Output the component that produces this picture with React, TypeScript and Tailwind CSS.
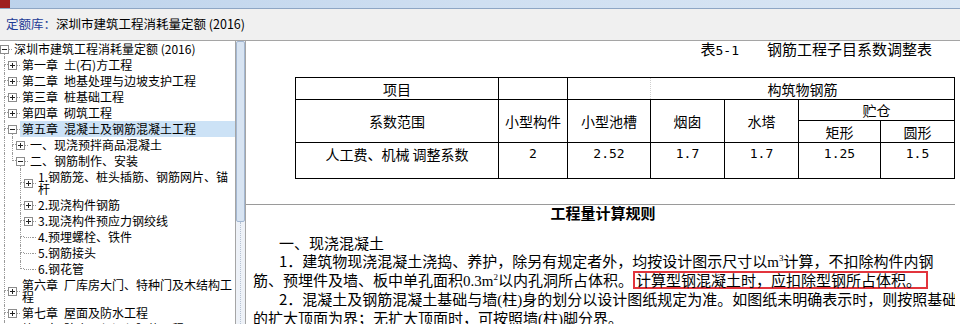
type Node = {
  lv: number;
  g: string;
  box?: 'plus' | 'minus';
  below?: boolean;
  sel?: boolean;
  a: string;
  b?: string;
};

const rows: Node[] = [
  { lv: 0, g: '', box: 'minus', below: true, a: '深圳市建筑工程消耗量定额 (2016)' },
  { lv: 1, g: 'T', box: 'plus', a: '第一章', b: '土(石)方工程' },
  { lv: 1, g: 'T', box: 'plus', a: '第二章', b: '地基处理与边坡支护工程' },
  { lv: 1, g: 'T', box: 'plus', a: '第三章', b: '桩基础工程' },
  { lv: 1, g: 'T', box: 'plus', a: '第四章', b: '砌筑工程' },
  { lv: 1, g: 'T', box: 'minus', below: true, sel: true, a: '第五章', b: '混凝土及钢筋混凝土工程' },
  { lv: 2, g: '|T', box: 'plus', a: '一、现浇预拌商品混凝土' },
  { lv: 2, g: '|L', box: 'minus', below: true, a: '二、钢筋制作、安装' },
  { lv: 3, g: '| T', box: 'plus', a: '1.钢筋笼、桩头插筋、钢筋网片、锚杆' },
  { lv: 3, g: '| T', box: 'plus', a: '2.现浇构件钢筋' },
  { lv: 3, g: '| T', box: 'plus', a: '3.现浇构件预应力钢绞线' },
  { lv: 3, g: '| T', a: '4.预埋螺栓、铁件' },
  { lv: 3, g: '| T', a: '5.钢筋接头' },
  { lv: 3, g: '| L', a: '6.钢花管' },
  { lv: 1, g: 'T', box: 'plus', a: '第六章', b: '厂库房大门、特种门及木结构工程' },
  { lv: 1, g: 'T', box: 'plus', a: '第七章', b: '屋面及防水工程' },
  { lv: 1, g: 'T', box: 'plus', a: '第八章', b: '防腐、保温与隔热工程' },
];

function Guide({ k }: { k: string }) {
  const vTop = k !== ' ';
  const horiz = k === 'T' || k === 'L';
  const vBottom = k === '|' || k === 'T';
  return (
    <div className="w-[8px] shrink-0 flex flex-col">
      <div className="flex-1 flex">
        <div className="w-[4px] shrink-0" />
        <div
          className={`flex-1 border-dotted border-[#9a9a9a] ${vTop ? 'border-l' : ''} ${horiz ? 'border-b' : ''}`}
        />
      </div>
      <div className="flex-1 flex">
        <div className="w-[4px] shrink-0" />
        <div className={`flex-1 border-dotted border-[#9a9a9a] ${vBottom ? 'border-l' : ''}`} />
      </div>
    </div>
  );
}

function ToggleBox({ kind }: { kind: 'plus' | 'minus' }) {
  return (
    <svg width="9" height="9" viewBox="0 0 9 9" className="block shrink-0">
      <rect x="0.5" y="0.5" width="8" height="8" fill="#fff" stroke="#8c8c8c" />
      <path d="M2 4.5h5" stroke="#222" />
      {kind === 'plus' && <path d="M4.5 2v5" stroke="#222" />}
    </svg>
  );
}

function TreeRow({ n }: { n: Node }) {
  return (
    <div className="flex items-stretch">
      {n.g.split('').map((k, i) => (
        <Guide key={i} k={k} />
      ))}
      {n.box ? (
        <div className="w-[9px] shrink-0 flex flex-col">
          <div className="flex-1" />
          <ToggleBox kind={n.box} />
          <div className="flex-1 flex">
            <div className="w-[4px] shrink-0" />
            <div className={`flex-1 border-dotted border-[#9a9a9a] ${n.below ? 'border-l' : ''}`} />
          </div>
        </div>
      ) : (
        <div className="w-[9px] shrink-0 flex flex-col">
          <div className="flex-1 border-b border-dotted border-[#9a9a9a]" />
          <div className="flex-1" />
        </div>
      )}
      <div className="w-[3px] shrink-0 flex flex-col">
        <div className="flex-1 border-b border-dotted border-[#9a9a9a]" />
        <div className="flex-1" />
      </div>
      <div
        className={`flex-1 min-w-0 py-[2px] pl-[2px] text-[12px] leading-[12px] text-black ${n.sel ? 'bg-[#cce2f6]' : ''}`}
      >
        {n.a}
        {n.b && (
          <>
            <span className="inline-block w-[6px]" />
            {n.b}
          </>
        )}
      </div>
    </div>
  );
}

const cell = 'border border-black p-0 text-center align-middle';
const num = "border border-black p-0 text-center align-top pt-[3px] font-['DejaVu_Sans_Mono',monospace] text-[13px]";
const serif = "font-['Liberation_Serif',serif]";

export default function App() {
  return (
    <div className="w-[960px] h-[324px] overflow-hidden bg-[#f0f0f0] flex flex-col font-['Noto_Sans_CJK_SC',sans-serif] text-black">
      {/* window title strip */}
      <div className="h-[9px] shrink-0 flex border-b border-[#8ea6c4] bg-linear-to-r from-[#bcd2eb] via-[#cfdff1] to-[#d9e6f4]">
        <div className="w-[10px] bg-[#9e1f1f]" />
      </div>

      {/* quota library label */}
      <div className="h-[31px] shrink-0 flex items-center pl-[6px] pb-[2px] text-[12.5px] leading-[14px]">
        <span className="text-[#1e3c96]">定额库：</span>
        <span>深圳市建筑工程消耗量定额 (2016)</span>
      </div>

      <div className="flex-1 min-h-0 flex">
        {/* tree */}
        <div className="w-[236px] shrink-0 bg-white border-t border-r border-[#a5a5a5] overflow-hidden">
          {rows.map((n, i) => (
            <TreeRow key={i} n={n} />
          ))}
        </div>

        {/* scrollbar */}
        <div className="w-[9px] shrink-0 flex flex-col border-t border-[#a5a5a5] bg-[#eef2f8]">
          <div className="h-[181px] shrink-0 bg-[#d8e4f2] border border-[#a3b7d1] rounded-[2px]" />
          <div className="flex-1 flex">
            <div className="w-[4px] shrink-0" />
            <div className="flex-1 border-l border-dotted border-[#b5c2d3]" />
          </div>
        </div>

        {/* document */}
        <div className="flex-1 min-w-0 flex flex-col bg-white border-t border-l border-[#a5a5a5]">
          <div className="h-[163px] shrink-0">
            <div className="flex justify-end pr-[28px] text-[15px] leading-[15px]">
              <span>
                表<span className="font-['DejaVu_Sans_Mono',monospace] text-[13px]">5-1</span>
              </span>
              <span className="ml-[28px]">钢筋工程子目系数调整表</span>
            </div>

            <table className="ml-[49px] mt-[19px] w-[659px] table-fixed border-collapse text-[14px] leading-[16px]">
              <colgroup>
                <col className="w-[203px]" />
                <col className="w-[69px]" />
                <col className="w-[83px]" />
                <col className="w-[74px]" />
                <col className="w-[74px]" />
                <col className="w-[82px]" />
                <col className="w-[74px]" />
              </colgroup>
              <tbody>
                <tr className="h-[22px]">
                  <td className={cell}>项目</td>
                  <td className={cell}></td>
                  <td className={`${cell} [border-right-style:dotted] border-r-[#cfcfcf]`}></td>
                  <td colSpan={4} className={`${cell} [border-left-style:dotted] border-l-[#cfcfcf]`}>
                    构筑物钢筋
                  </td>
                </tr>
                <tr className="h-[21px]">
                  <td rowSpan={2} className={cell}>系数范围</td>
                  <td rowSpan={2} className={cell}>小型构件</td>
                  <td rowSpan={2} className={cell}>小型池槽</td>
                  <td rowSpan={2} className={cell}>烟囱</td>
                  <td rowSpan={2} className={cell}>水塔</td>
                  <td colSpan={2} className={cell}>贮仓</td>
                </tr>
                <tr className="h-[22px]">
                  <td className={cell}>矩形</td>
                  <td className={cell}>圆形</td>
                </tr>
                <tr className="h-[36px]">
                  <td className="border border-black p-0 pt-[3px] text-center align-top">人工费、机械 调整系数</td>
                  <td className={num}>2</td>
                  <td className={num}>2.52</td>
                  <td className={num}>1.7</td>
                  <td className={num}>1.7</td>
                  <td className={num}>1.25</td>
                  <td className={num}>1.5</td>
                </tr>
              </tbody>
            </table>
          </div>

          <div className="flex-1 min-h-0 mr-[5px] border-t border-[#9a9a9a] overflow-hidden pl-[7px] text-[15px] leading-[18px] whitespace-nowrap">
            <div className="text-center font-bold leading-[16px] pr-[2px]">工程量计算规则</div>
            <div className="mt-[13px] pl-[26px]">一、现浇混凝土</div>
            <div className="pl-[26px]">
              1．建筑物现浇混凝土浇捣、养护，除另有规定者外，均按设计图示尺寸以
              <span className={serif}>
                m<span className="text-[9px] leading-none align-[6px]">3</span>
              </span>
              计算，不扣除构件内钢
            </div>
            <div>
              筋、预埋件及墙、板中单孔面积
              <span className={serif}>
                0.3m<span className="text-[9px] leading-none align-[6px]">2</span>
              </span>
              以内孔洞所占体积。
              <span className="inline-block border-2 border-[#e2343c] leading-[14px] pl-[1px] pr-[5px]">
                计算型钢混凝土时，应扣除型钢所占体积。
              </span>
            </div>
            <div className="pl-[26px]">
              2．混凝土及钢筋混凝土基础与墙<span className={serif}>(</span>柱<span className={serif}>)</span>
              身的划分以设计图纸规定为准。如图纸未明确表示时，则按照基础
            </div>
            <div>
              的扩大顶面为界；无扩大顶面时，可按照墙<span className={serif}>(</span>柱<span className={serif}>)</span>
              脚分界。
            </div>
            <div className="pl-[26px]">
              3．柱：按设计图示尺寸以体积计算，附墙柱、依附柱上的牛腿并入柱身体积计算。
            </div>
          </div>
        </div>
      </div>
    </div>
  );
}
